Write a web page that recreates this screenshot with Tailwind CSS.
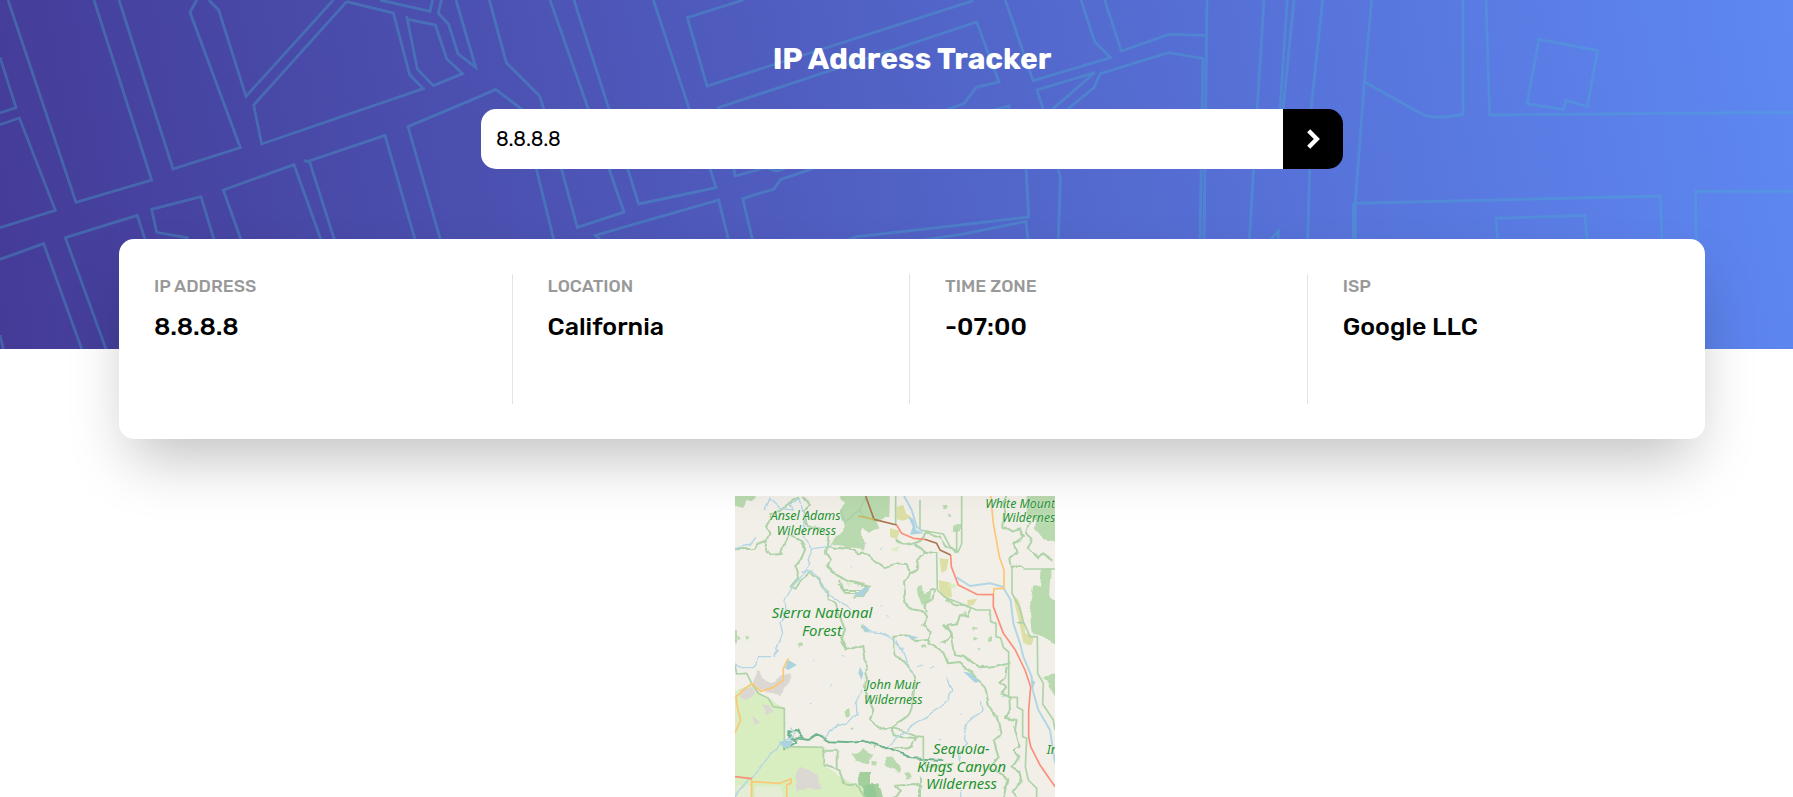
<!DOCTYPE html>
<html lang="en">
<head>
<meta charset="utf-8">
<title>IP Address Tracker</title>
<script src="https://cdn.jsdelivr.net/npm/@tailwindcss/browser@4"></script>
</head>
<body class="h-screen overflow-hidden bg-white font-['Rubik','Roboto',sans-serif] text-black">
<header class="relative h-[349px] bg-[linear-gradient(80deg,#443b97_0%,#5e88f2_100%)]">
  <svg class="absolute inset-0 h-[349px] w-[1793px]" viewBox="0 0 5379 1047" fill="none" stroke="#45b2cd" stroke-opacity=".33" stroke-width="8.5" aria-hidden="true">
    <path d="M24 0L228 607L455 540L282 0M357 0L519 507L721 443L570 37L590 0M626 0L656 30L738 289L1000 0M1040 5L761 315L785 432L1270 266L1229 224L1180 39L1040 5M1140 0L1290 34L1298 0M1324 0L1315 40L1346 73L1374 162L1427 202L1368 0M1224 58L1306 75L1340 176L1388 221L1300 257L1252 207L1220 48M0 172L48 323L0 339M0 374L58 354L166 631L0 683M0 778L131 731L245 1047M0 1005L10 1047M318 1047L196 713L412 646L436 722M566 714L470 697L455 628L603 590L643 722M724 722L670 570L882 494L964 722M1004 722L928 483L1155 406L1246 722M912 482L930 486M1322 722L1224 380L1410 302L1487 268L1600 354"/>
    <path transform="translate(1410 0)" d="M58 0L109 188L209 288L232 360M240 0L370 370L462 636L322 682L270 490M312 0L424 350L506 612L738 563L718 500M550 0L672 370M820 0L652 53L711 258L1510 2M742 324L1520 66L1587 246L1518 262L1483 310L1400 340M780 450L796 528L920 494M880 500L920 514L960 500M190 470L252 722M776 722L746 600L376 706L394 722M848 722L818 596L912 567L932 538L1040 502M1128 722L1160 710L1350 689L1676 651L1668 500M1350 722L1490 700L1668 664L1674 722"/>
    <path transform="translate(2700 0)" d="M316 0L399 242L632 173L584 125L543 0M614 0L664 153L807 103L918 106M440 360L411 270L584 218L450 334M480 346L582 263L601 221L805 158L912 176M921 0L912 722M909 176L900 722M1092 0L1072 320L1048 722M1162 0L1138 360M1182 0L1146 360M1268 0L1234 320L1223 722M280 330L327 318L327 330M474 500L481 535L475 722M1112 718L1135 694L1134 722"/>
    <path transform="translate(3960 0)" d="M155 0L133 245L106 610M106 722V610L1021 588L1026 722M100 610V722M133 245L305 342Q340 360 429 343V0M498 0L509 345L1420 337M657 118L833 152L802 320L738 301L731 329L621 311ZM533 722L528 655L795 646L801 722M1129 722L1126 574H1420"/>
  </svg>
  <div class="relative flex flex-col items-center pl-[31px] pt-[39px]">
    <h1 class="whitespace-nowrap text-[30px] font-bold leading-10 text-white">IP Address Tracker</h1>
    <form class="mt-[30px] flex h-[60px] w-[862px] overflow-hidden rounded-[15px]">
      <input class="min-w-0 flex-1 bg-white px-[15px] text-[20px] outline-none" value="8.8.8.8" aria-label="IP address">
      <button type="button" class="flex w-[60px] items-center justify-center bg-black" aria-label="Search">
        <svg class="h-5 w-[13px]" viewBox="0 0 13 20" fill="none" stroke="#fff" stroke-width="4.4"><path d="M1.7 1.8L9.8 10L1.7 18.2"/></svg>
      </button>
    </form>
  </div>
</header>
<main>
  <section class="relative z-10 ml-[119px] -mt-[110px] grid h-[200px] w-[1586px] grid-cols-[358.6px_397.5px_397.7px_1fr] rounded-[15px] bg-white px-[35px] py-[35px] shadow-[0_30px_60px_-12px_rgba(0,0,0,0.25)]">
    <div class="border-r border-[#e3e3e3]">
      <h2 class="text-[17.6px] font-medium leading-6 text-[#999]">IP ADDRESS</h2>
      <p class="mt-[13px] text-[25px] leading-8 font-medium">8.8.8.8</p>
    </div>
    <div class="border-r border-[#e3e3e3] pl-[35px]">
      <h2 class="text-[17.6px] font-medium leading-6 text-[#999]">LOCATION</h2>
      <p class="mt-[13px] text-[25px] leading-8 font-medium">California</p>
    </div>
    <div class="border-r border-[#e3e3e3] pl-[35px]">
      <h2 class="text-[17.6px] font-medium leading-6 text-[#999]">TIME ZONE</h2>
      <p class="mt-[13px] text-[25px] leading-8 font-medium">-07:00</p>
    </div>
    <div class="pl-[35px]">
      <h2 class="text-[17.6px] font-medium leading-6 text-[#999]">ISP</h2>
      <p class="mt-[13px] text-[25px] leading-8 font-medium">Google LLC</p>
    </div>
  </section>
  <svg class="ml-[735px] mt-[57px] block h-[301px] w-[320px]" viewBox="15 18 960 903" fill="none" stroke-linejoin="round">
    <defs>
      <filter id="rough" x="0" y="0" width="1000" height="930" filterUnits="userSpaceOnUse">
        <feTurbulence type="fractalNoise" baseFrequency=".035" numOctaves="1" seed="4"/>
        <feDisplacementMap in="SourceGraphic" scale="18" xChannelSelector="R" yChannelSelector="G"/>
      </filter>
    </defs>
    <path fill="#f2efe9" d="M0 0H1000V930H0Z"/>
    <!-- forests and parks -->
    <g filter="url(#rough)">
    <g fill="#b9d9ae">
      <path d="M310 0H480L478 80L440 92L448 118L420 128L395 112L398 150L405 178L360 172L320 165L300 158L345 110L330 60L345 42Z"/>
      <path d="M0 0L76 20L66 34L50 30L40 50L20 52L0 48ZM890 0H1000V158L940 148L912 120L915 90L890 70ZM935 236L965 240L960 320L1000 345V480L940 440L905 430L900 370L912 285L930 290ZM940 560L1000 548V662Z"/>
      <path d="M560 290L575 285L580 310L604 300L600 335L575 345L565 320ZM364 790L390 786L400 774L430 795L415 820L380 812ZM466 800L490 800L512 830L506 850L490 835L466 826Z"/>
      <path fill="#a3cf9d" d="M386 846H420V885L445 880L462 930H390Z"/>
      <path fill="#93c994" d="M405 885L430 882L440 921H400Z"/>
      <path d="M20 432L32 442L24 450ZM50 438L62 446L52 452ZM700 365L712 372L700 378ZM775 370L786 376L776 382ZM732 410L748 414L734 424ZM640 45h10v12h-10ZM655 70h8v10h-8ZM672 108l18-4v20l-18 3ZM728 440l14 6-14 6ZM344 664l14-6 2 20-12 6ZM360 715l10-3-2 10ZM425 812l16 3-4 12-12-2ZM520 850l20-5 5 16-15 5ZM572 470l14-8 4 10-14 4ZM775 445l14-4v12l-12 4ZM742 470l12 4-8 6ZM626 460l16-8 4 12ZM428 766l14 3-6 8ZM200 460l14-4 2 10-12 4Z"/>
    </g>
    <path fill="#d8edc0" d="M0 600L20 600L66 582L90 610L130 635L163 655V770L280 770L284 830L340 865L400 895V930H0Z"/>
    <path fill="#dbd8d3" d="M82 540L92 545L100 568L120 578L155 560L180 550L185 565L165 590L150 612L120 608L90 600L68 582ZM30 600L62 590L75 610L50 630L30 620ZM95 640L120 645L130 665L110 675ZM62 680L92 700L74 708ZM215 830L262 855L275 900L230 890L200 910L195 860Z"/>
    </g>
    <path fill="#f2efe9" opacity=".5" d="M20 885H60V921H20ZM75 890L150 888L160 921H75Z"/>
    <path fill="#dde0a6" d="M500 50L520 45L528 70L545 82L520 92L500 88ZM480 115L510 122L500 148L480 140ZM628 205L656 208L650 240L635 250ZM626 270L662 278L666 322L640 320L628 300ZM712 330L742 326L730 345L712 347ZM848 315L866 330L880 380L886 430L912 440L905 465L880 460L868 400ZM878 450H905L895 468Z"/>
    <path fill="#d6efb9" opacity=".8" d="M655 278L682 285L674 295L655 290ZM480 178L510 168L500 185ZM350 275L365 280L355 290ZM700 880L720 884L708 890Z"/>
    <!-- wilderness boundaries -->
    <g filter="url(#rough)" stroke="#aed3a8" stroke-width="6">
      <path d="M0 178L75 176L82 162L110 150L118 130L108 112L125 88L118 70L150 62L190 28L210 22M110 150L105 178L128 195L152 192L165 155L180 135L210 152L225 175L215 205L195 230L205 262L182 290L198 296L212 270L240 248L262 268L295 310L292 330L316 336L330 380L345 420L336 440L348 480L336 456"/>
      <path d="M220 20L240 45L220 66L232 105L275 118L295 138L290 172L325 178L355 172L385 190L400 184L430 210L465 232L500 220L530 222L540 250L562 240L570 200L584 185L620 190"/>
      <path d="M290 172L288 188L300 210L290 228L320 255L360 275L420 290L400 320L370 326M325 282L345 308L385 310M540 250L525 275L528 310L522 335L545 358L575 362L590 385L580 405L602 428L595 460L640 485L655 520L690 516L740 565L765 590L775 640L800 680L812 730L792 755L806 800L780 835L832 865L820 930"/>
      <path d="M500 145L530 165L570 155L588 130L630 140L650 170L680 188M584 185L556 160M380 60L410 85L432 90M410 18L380 70L345 95L335 60M825 18L820 110L846 125L868 118L882 138L850 162L860 185L838 205L842 235L870 225L880 235M900 90L888 130L908 150L896 175L925 205L940 190L970 212"/>
      <path d="M590 385L575 410M600 300L615 295L612 325L585 340L590 370M650 330L670 345L720 350L715 380L690 375L682 400L650 405L665 430L640 460M640 400L665 430L675 495L700 500L750 535L800 530L838 520M830 530L825 560L808 575L830 590L812 610L838 622L840 660L825 684L860 690L855 720L872 770L850 780L865 800L845 830L868 845L875 875L850 900L860 930"/>
      <path d="M340 450L350 480L400 465L410 540L405 600L430 660L420 690L450 716L485 712L570 740M485 712L530 680L545 655L558 560L520 515L496 490L490 440L530 436L560 450L600 446M485 712L495 740L562 744L545 770L475 778M580 890L550 882L495 888L510 905L485 930M570 860V930"/>
      <path d="M280 772V825L325 840L340 880L380 885L410 930M280 782H320V840M330 270L340 300L395 300M395 405L410 425M860 395L880 400"/>
      <path stroke="#6eb58d" d="M180 722L185 745L215 746L235 750L262 732L300 754L345 756L400 752L450 768L490 782L545 805L640 810M163 775L200 755L178 742V724L200 720L220 744"/>
    </g>
    <path stroke="#aed3a8" stroke-width="5" d="M620 190L622 300L645 322L690 340L740 360H780L782 395L798 400V440L812 444L820 472L836 486V622H862V652L878 660V740L890 745L886 830L895 870L920 895V921M680 188V118M497 18V105M570 30V120L640 132L660 170L684 186L695 162V18M880 237H975M846 235V310L868 350L878 390L900 440L922 440L923 550L940 580L938 642L970 690L975 720M570 740H580V810L590 832L670 820M15 525L20 552L50 550L66 582L85 610L115 625L130 650L163 655V770L280 772M18 420V460"/>
    <!-- water -->
    <g stroke="#b3d6e3" stroke-width="4">
      <g filter="url(#rough)">
      <path d="M120 30L150 56L190 60L180 40L210 25L225 100L218 140L248 176L295 170L310 160M248 176L236 205L242 222L212 260L188 290L165 330L168 365L150 400L158 430L140 478L145 480L130 500L85 500L70 530L35 530L0 510M0 178L62 165L78 145M105 60L120 25"/>
      <path d="M212 245L250 246L275 280L295 315L320 326L360 356M415 425L450 428L490 450L520 480M500 450L520 490L530 520L555 555M650 565L665 600L655 630L600 675L540 712L515 730L470 770M752 630L756 660L710 700L700 745L712 760L685 790L690 820M395 600L376 640L378 670L350 700L295 720L285 745M185 710L195 730L150 766L125 790L75 850L30 900L15 921M690 900L700 930"/>
      </g>
      <path stroke-width="6" d="M522 18L545 60L560 110L578 125M680 262L720 288L780 280L818 290L842 330L850 400L870 460L880 500L905 560L908 600L925 660L960 720L975 820"/>
      <path fill="#aad3df" stroke="none" d="M535 80L550 88L558 120L580 130L540 134L548 110ZM400 295L420 290L400 318L370 318ZM395 400L420 420L408 428ZM530 434L565 442L545 450ZM175 510L200 525L175 540L165 535ZM390 530L400 550L395 570L385 550ZM700 545L720 548L750 575L735 578ZM145 755L190 750L180 770L162 775ZM904 570L916 575L908 595Z"/>
      <path stroke-width="3" d="M440 90l4 5M362 228l5 5M450 180l8-8M395 168l6-5M470 375l6 7M452 345l6 5M320 780l8 3M335 495l8 5M560 530l20-5M600 535l12-6M625 750l8-2M690 670l5 5M240 640l5 2M300 590l5-8M250 510l4 3"/>
    </g>
    <!-- roads -->
    <g stroke-width="5">
      <path stroke="#fcc774" d="M782 18L790 100L808 200L822 240V295L792 296L790 315M15 728L32 690L22 650L18 620L30 610L45 595L66 580L92 604L130 592L160 570V535L175 505M65 862V921M65 875L150 880L183 866V880L170 884V921"/>
      <path stroke="#fa8f7a" d="M500 105L515 130L550 145L584 148M662 195L664 230L685 285L740 313L790 314V350L820 430L856 480L885 540L902 590L896 660V740L902 770L930 825L975 890M15 860L65 866"/>
      <path stroke="#a9764f" d="M407 18L432 88L500 105M584 148L620 160L630 180L662 195"/>
      <path stroke="#d0b45a" stroke-width="4" d="M385 78L432 88"/>
    </g>
    <g fill="#23932f" stroke="#f5f3ed" stroke-width="2" paint-order="stroke" font-family="'Noto Sans',sans-serif" font-style="italic" font-weight="400">
      <g font-size="37">
        <text x="122" y="90" textLength="210" lengthAdjust="spacingAndGlyphs">Ansel Adams</text>
        <text x="140" y="135" textLength="178" lengthAdjust="spacingAndGlyphs">Wilderness</text>
        <text x="766" y="53" textLength="209" lengthAdjust="spacingAndGlyphs">White Mount</text>
        <text x="816" y="97" textLength="160" lengthAdjust="spacingAndGlyphs">Wildernes</text>
        <text x="408" y="597" textLength="162" lengthAdjust="spacingAndGlyphs">John Muir</text>
        <text x="402" y="641" textLength="176" lengthAdjust="spacingAndGlyphs">Wilderness</text>
        <text x="950" y="792">In</text>
      </g>
      <g font-size="44">
        <text x="125" y="384" textLength="302" lengthAdjust="spacingAndGlyphs">Sierra National</text>
        <text x="216" y="437" textLength="120" lengthAdjust="spacingAndGlyphs">Forest</text>
        <text x="609" y="791" textLength="170" lengthAdjust="spacingAndGlyphs">Sequoia-</text>
        <text x="561" y="845" textLength="267" lengthAdjust="spacingAndGlyphs">Kings Canyon</text>
        <text x="588" y="898" textLength="213" lengthAdjust="spacingAndGlyphs">Wilderness</text>
      </g>
    </g>
  </svg>
</main>
</body>
</html>
